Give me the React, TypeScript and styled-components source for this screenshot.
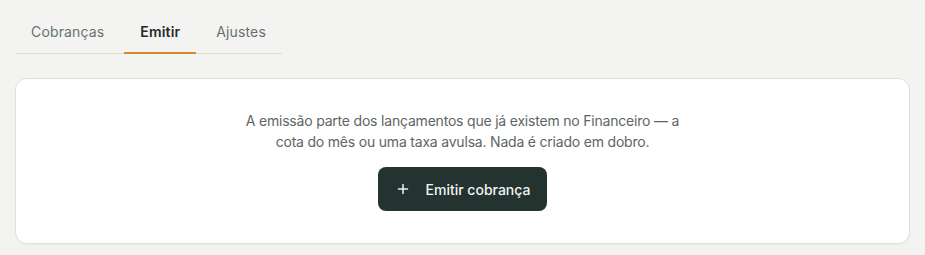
import React from "react";
import styled, { createGlobalStyle } from "styled-components";

const Global = createGlobalStyle`
  html, body { margin: 0; padding: 0; background: #f3f4f2; }
  body { font-family: Inter, "Noto Sans", sans-serif; -webkit-font-smoothing: antialiased; }
`;

const Page = styled.div`
  padding: 14px 15px 11px;
  display: flex;
  flex-direction: column;
  gap: 24px;
`;

const TabList = styled.div`
  display: flex;
  gap: 4px;
  align-self: flex-start;
  border-bottom: 1px solid #d9dcd9;
`;

const Tab = styled.button<{ $active?: boolean }>`
  font-family: inherit;
  font-size: 14px;
  letter-spacing: 0.15px;
  font-weight: ${(p) => (p.$active ? 600 : 400)};
  color: ${(p) => (p.$active ? "#1f2b28" : "#66716d")};
  background: none;
  border: none;
  padding: 8px 16px 10px;
  line-height: 20px;
  margin-bottom: -1px;
  border-bottom: 2px solid ${(p) => (p.$active ? "#d6892a" : "transparent")};
  cursor: pointer;
`;

const Card = styled.div`
  background: #ffffff;
  border: 1px solid #dde2e0;
  border-radius: 12px;
  padding: 31px 24px 32px;
  display: flex;
  flex-direction: column;
  align-items: center;
  gap: 15px;
  box-shadow: 0 1px 2px rgba(0, 0, 0, 0.04);
`;

const Message = styled.p`
  margin: 0;
  max-width: 450px;
  text-align: center;
  font-size: 14px;
  line-height: 21px;
  letter-spacing: -0.2px;
  color: #5d6663;
`;

const PrimaryButton = styled.button`
  display: flex;
  align-items: center;
  gap: 15px;
  height: 44px;
  padding: 0 17px 0 17px;
  border: none;
  border-radius: 8px;
  background: #243230;
  color: #f2f4f3;
  font-family: inherit;
  font-size: 14px;
  font-weight: 500;
  letter-spacing: 0;
  cursor: pointer;
`;

const PlusIcon = () => (
  <svg width="16" height="16" viewBox="0 0 16 16" fill="none" stroke="currentColor" strokeWidth="1.5" strokeLinecap="round">
    <path d="M8 3.5v9M3.5 8h9" />
  </svg>
);

export default function App() {
  return (
    <>
      <Global />
      <Page>
        <TabList>
          <Tab>Cobranças</Tab>
          <Tab $active>Emitir</Tab>
          <Tab>Ajustes</Tab>
        </TabList>
        <Card>
          <Message>
            A emissão parte dos lançamentos que já existem no Financeiro — a cota do mês ou uma taxa avulsa. Nada é criado em dobro.
          </Message>
          <PrimaryButton>
            <PlusIcon />
            Emitir cobrança
          </PrimaryButton>
        </Card>
      </Page>
    </>
  );
}
